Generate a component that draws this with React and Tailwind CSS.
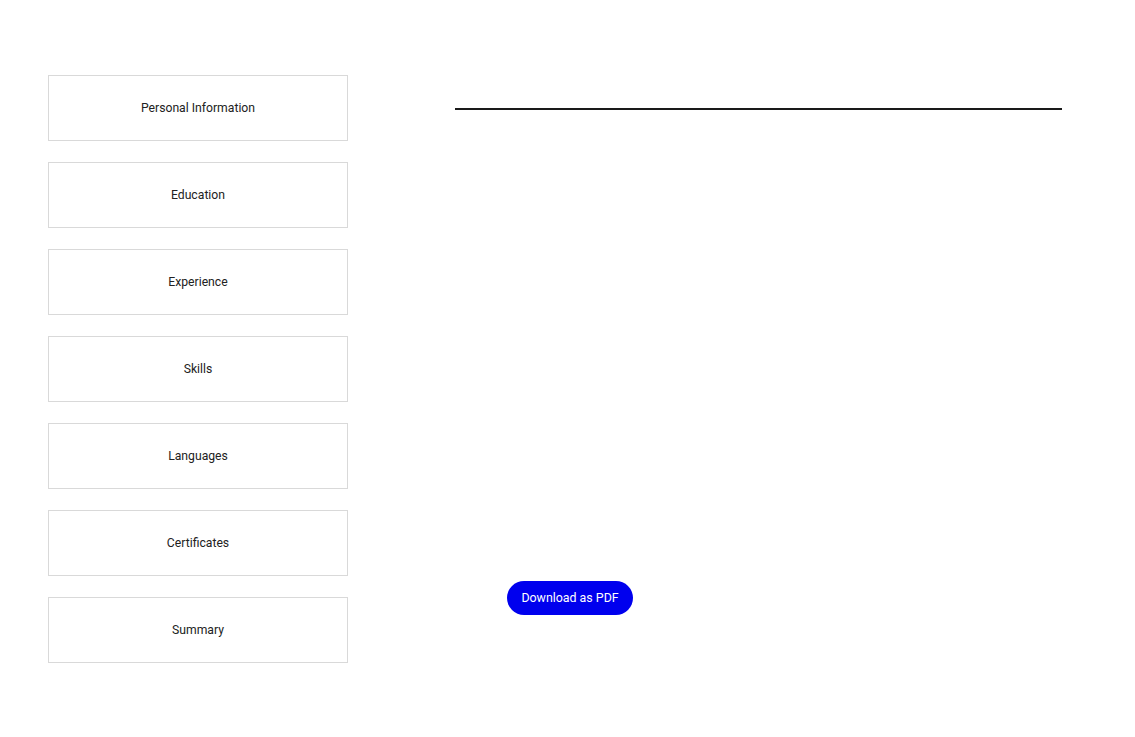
import React from 'react';

const sections = [
  'Personal Information',
  'Education',
  'Experience',
  'Skills',
  'Languages',
  'Certificates',
  'Summary',
];

const App = () => {
  return (
    <div
      className="min-h-screen bg-white flex"
      style={{ fontFamily: 'Roboto, "Liberation Sans", sans-serif' }}
    >
      <div className="pl-12 pt-[75px] flex flex-col gap-[21px]">
        {sections.map((name) => (
          <button
            key={name}
            className="w-[300px] h-[66px] border border-[#d9d9d9] bg-white text-[12.2px] text-[#222] flex items-center justify-center"
          >
            {name}
          </button>
        ))}
      </div>

      <div className="ml-[107px] pt-[108px] w-[607px] flex flex-col">
        <div className="h-[2px] bg-[#1a1a1a]" />
        <div className="h-[471px]" />
        <button className="ml-[52px] w-[126px] h-[34px] rounded-full bg-[#0000ee] text-white text-[12.4px] flex items-center justify-center">
          Download as PDF
        </button>
      </div>
    </div>
  );
};

export default App;
